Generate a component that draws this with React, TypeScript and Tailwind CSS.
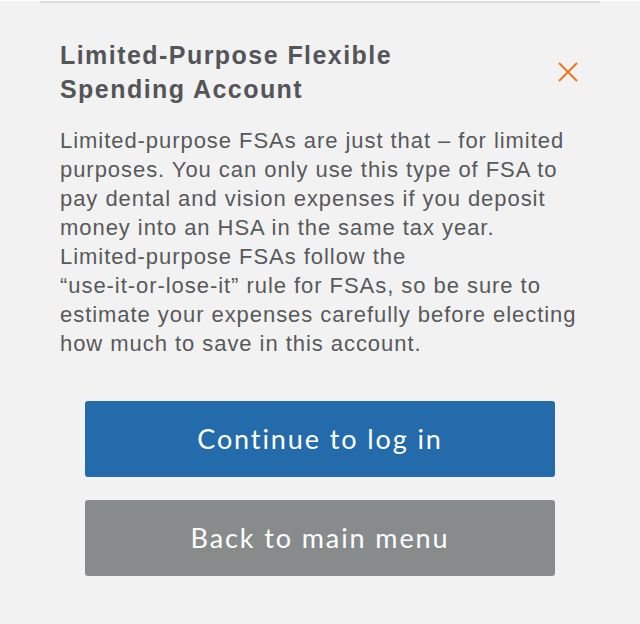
import React from "react";

export default function App() {
  return (
    <div className="min-h-[624px] w-[640px] bg-[#f2f2f2] px-[40px]">
      <div className="mt-[1px] border-t-2 border-[#dcdcdc] px-[20px] pt-[35px]">
        <div className="flex items-center justify-between">
          <h2
            className="text-[25px] font-bold leading-[34px] tracking-[1.45px] text-[#545559]"
            style={{ fontFamily: '"Liberation Sans", Arial, sans-serif' }}
          >
            Limited-Purpose Flexible
            <br />
            Spending Account
          </h2>
          <button className="mr-[1px] flex h-[22px] w-[22px] items-center justify-center">
            <svg width="22" height="22" viewBox="0 0 22 22">
              <path d="M2 2 L20 20 M20 2 L2 20" stroke="#e87722" strokeWidth="2" fill="none" />
            </svg>
          </button>
        </div>
        <p
          className="mt-[20px] text-[22px] leading-[29px] tracking-[0.95px] text-[#58595b]"
          style={{ fontFamily: '"Liberation Sans", Arial, sans-serif' }}
        >
          Limited-purpose FSAs are just that – for limited purposes. You can only use this type of FSA to pay dental
          and vision expenses if you deposit money into an HSA in the same tax year.
          <br />
          Limited-purpose FSAs follow the <span className="whitespace-nowrap">“use-it-or-lose-it”</span> rule for
          FSAs, so be sure to estimate your expenses carefully before electing how much to save in this account.
        </p>
        <div
          className="mt-[43px] flex flex-col items-center gap-[23px]"
          style={{ fontFamily: 'Lato, "Open Sans", sans-serif' }}
        >
          <button className="h-[76px] w-[470px] rounded-[3px] bg-[#246bab] text-[27px] tracking-[1.9px] text-white">
            Continue to log in
          </button>
          <button className="h-[76px] w-[470px] rounded-[3px] bg-[#888b8c] text-[27px] tracking-[1.9px] text-white">
            Back to main menu
          </button>
        </div>
      </div>
    </div>
  );
}
